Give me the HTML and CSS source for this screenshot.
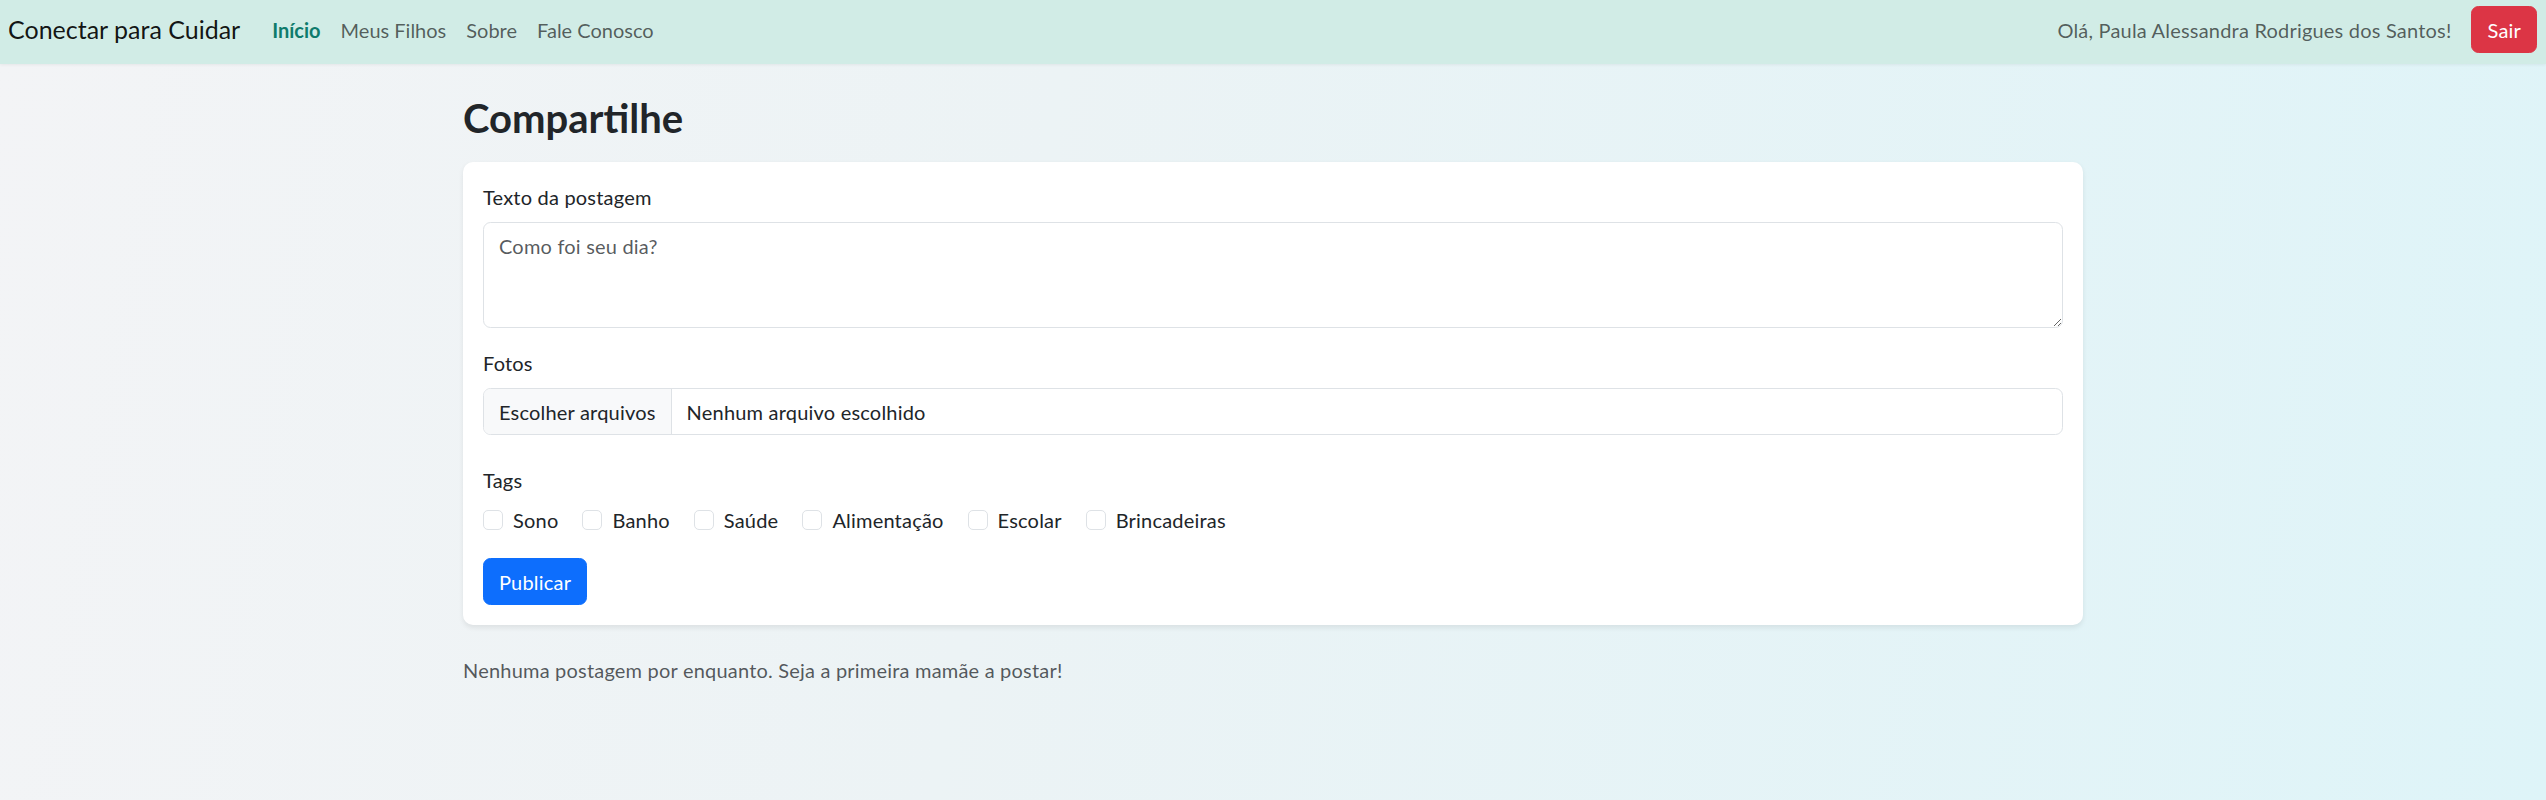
FILE: index.html
```html
<!DOCTYPE html>
<html lang="pt-BR">
<head>
<meta charset="utf-8">
<title>Conectar para Cuidar</title>
<link rel="stylesheet" href="styles.css">
</head>
<body>
<nav class="topbar">
  <div class="topbar-left">
    <a class="brand" href="#">Conectar para Cuidar</a>
    <ul class="nav-links">
      <li><a class="nav-link active" href="#">Início</a></li>
      <li><a class="nav-link" href="#">Meus Filhos</a></li>
      <li><a class="nav-link" href="#">Sobre</a></li>
      <li><a class="nav-link" href="#">Fale Conosco</a></li>
    </ul>
  </div>
  <div class="topbar-right">
    <span class="greeting">Olá, Paula Alessandra Rodrigues dos Santos!</span>
    <button class="btn btn-danger" type="button">Sair</button>
  </div>
</nav>

<main class="container">
  <h2 class="page-title">Compartilhe</h2>
  <form class="card">
    <div class="field">
      <label class="field-label" for="texto">Texto da postagem</label>
      <textarea id="texto" class="textarea" placeholder="Como foi seu dia?"></textarea>
    </div>
    <div class="field field-photos">
      <label class="field-label">Fotos</label>
      <div class="file-input">
        <span class="file-btn">Escolher arquivos</span>
        <span class="file-name">Nenhum arquivo escolhido</span>
      </div>
    </div>
    <div class="field field-tags">
      <label class="field-label">Tags</label>
      <div class="checks">
        <label class="check"><input type="checkbox" class="check-input"><span>Sono</span></label>
        <label class="check"><input type="checkbox" class="check-input"><span>Banho</span></label>
        <label class="check"><input type="checkbox" class="check-input"><span>Saúde</span></label>
        <label class="check"><input type="checkbox" class="check-input"><span>Alimentação</span></label>
        <label class="check"><input type="checkbox" class="check-input"><span>Escolar</span></label>
        <label class="check"><input type="checkbox" class="check-input"><span>Brincadeiras</span></label>
      </div>
    </div>
    <div class="actions">
      <button class="btn btn-primary" type="button">Publicar</button>
    </div>
  </form>
  <p class="empty">Nenhuma postagem por enquanto. Seja a primeira mamãe a postar!</p>
</main>
</body>
</html>
```

FILE: styles.css
```css
* {
  box-sizing: border-box;
}

html {
  min-height: 100%;
}

body {
  margin: 0;
  min-height: 100vh;
  font-family: Lato, "Liberation Sans", sans-serif;
  font-size: 20px;
  line-height: 30px;
  letter-spacing: 0.2px;
  color: #212529;
  background: linear-gradient(100deg, #f3f4f6 0%, #ecf3f5 40%, #def4f8 100%);
}

/* ---------- top bar ---------- */
.topbar {
  height: 64px;
  padding: 0 9px 5px 8px;
  display: flex;
  align-items: center;
  justify-content: space-between;
  background: #d1ece6;
  box-shadow: 0 1px 3px rgba(0, 0, 0, 0.06);
}

.topbar-left,
.topbar-right {
  display: flex;
  align-items: center;
}

.brand {
  font-size: 25px;
  line-height: 37px;
  letter-spacing: 0;
  color: rgba(0, 0, 0, 0.92);
  text-decoration: none;
  margin-right: 22px;
}

.nav-links {
  display: flex;
  list-style: none;
  margin: 0;
  padding: 0;
}

.nav-link {
  display: block;
  padding: 0 10px;
  letter-spacing: 0;
  color: rgba(0, 0, 0, 0.62);
  text-decoration: none;
}

.nav-link.active {
  color: #0f7b6c;
  font-weight: 700;
}

.greeting {
  color: rgba(0, 0, 0, 0.62);
  margin-right: 20px;
}

/* ---------- buttons ---------- */
.btn {
  height: 47px;
  padding: 0 15px;
  font: inherit;
  letter-spacing: inherit;
  border: 1px solid transparent;
  border-radius: 7.5px;
  color: #fff;
  cursor: pointer;
}

.btn-danger {
  background: #dc3545;
  border-color: #dc3545;
}

.btn-primary {
  background: #0d6efd;
  border-color: #0d6efd;
}

/* ---------- main ---------- */
.container {
  width: 1620px;
  margin: 0 auto;
  padding-top: 30px;
}

.page-title {
  margin: 0 0 20px;
  font-size: 40px;
  line-height: 48px;
  font-weight: 700;
  letter-spacing: 0;
  color: #212529;
}

.card {
  background: #fff;
  border-radius: 10px;
  padding: 20px;
  box-shadow: 0 2.5px 5px rgba(0, 0, 0, 0.075);
}

.field {
  margin-bottom: 20px;
}

.field-photos {
  margin-bottom: 30px;
}

.field-tags {
  margin-bottom: 23px;
}

.field-label {
  display: block;
  margin-bottom: 10px;
}

.textarea {
  display: block;
  width: 100%;
  height: 106px;
  padding: 7.5px 15px;
  font: inherit;
  letter-spacing: inherit;
  color: #212529;
  border: 1px solid #dee2e6;
  border-radius: 7.5px;
  resize: vertical;
  outline: none;
}

.textarea::placeholder {
  color: rgba(33, 37, 41, 0.75);
}

.file-input {
  display: flex;
  height: 47px;
  border: 1px solid #dee2e6;
  border-radius: 7.5px;
  overflow: hidden;
}

.file-btn {
  display: flex;
  align-items: center;
  padding: 0 15px;
  background: #f8f9fa;
  border-right: 1px solid #dee2e6;
}

.file-name {
  display: flex;
  align-items: center;
  padding: 0 15px;
}

.checks {
  display: flex;
  gap: 24px;
}

.check {
  display: flex;
  align-items: center;
  height: 30px;
}

.check-input {
  appearance: none;
  width: 20px;
  height: 20px;
  margin: 0 10px 0 0;
  border: 1px solid #dee2e6;
  border-radius: 5px;
  background: #fff;
}

.actions {
  display: flex;
}

.empty {
  margin: 30px 0 0;
  color: rgba(33, 37, 41, 0.75);
}
```
